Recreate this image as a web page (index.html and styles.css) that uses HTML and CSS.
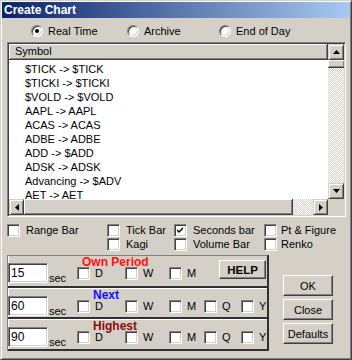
FILE: index.html
```html
<!DOCTYPE html>
<html>
<head>
<meta charset="utf-8">
<title>Create Chart</title>
<link rel="stylesheet" href="styles.css">
</head>
<body>
<div class="window">
  <div class="titlebar">Create Chart</div>

  <div class="radios">
    <div class="radio r1"><span class="rb on"></span>Real Time</div>
    <div class="radio r2"><span class="rb"></span>Archive</div>
    <div class="radio r3"><span class="rb"></span>End of Day</div>
  </div>

  <div class="listbox">
    <div class="lb-header">Symbol</div>
    <div class="sbtn up"><svg width="7" height="4" viewBox="0 0 7 4"><polygon points="3.5,0 7,4 0,4" fill="#000"/></svg></div>
    <div class="lb-items">
      <div>$TICK -&gt; $TICK</div>
      <div>$TICKI -&gt; $TICKI</div>
      <div>$VOLD -&gt; $VOLD</div>
      <div>AAPL -&gt; AAPL</div>
      <div>ACAS -&gt; ACAS</div>
      <div>ADBE -&gt; ADBE</div>
      <div>ADD -&gt; $ADD</div>
      <div>ADSK -&gt; ADSK</div>
      <div>Advancing -&gt; $ADV</div>
      <div>AET -&gt; AET</div>
    </div>
    <div class="vscroll">
      <div class="vthumb"></div>
      <div class="hatch"></div>
      <div class="sbtn down"><svg width="7" height="4" viewBox="0 0 7 4"><polygon points="0,0 7,0 3.5,4" fill="#000"/></svg></div>
    </div>
    <div class="hscroll">
      <div class="sbtn left"><svg width="4" height="7" viewBox="0 0 4 7"><polygon points="4,0 4,7 0,3.5" fill="#000"/></svg></div>
      <div class="hthumb"></div>
      <div class="hatch hh"></div>
      <div class="sbtn right"><svg width="4" height="7" viewBox="0 0 4 7"><polygon points="0,0 4,3.5 0,7" fill="#000"/></svg></div>
    </div>
    <div class="corner"></div>
  </div>

  <div class="types">
    <div class="chk"><span class="cb"></span>Range Bar</div>
    <div class="chk"><span class="cb"></span>Tick Bar</div>
    <div class="chk"><span class="cb"><svg width="7" height="7" viewBox="0 0 7 7"><path d="M0 2 L2 4 L6 0 L6 2 L2 6 L0 4 Z" fill="#000"/></svg></span>Seconds bar</div>
    <div class="chk pt"><span class="cb"></span>Pt &amp; Figure</div>
    <div></div>
    <div class="chk"><span class="cb"></span>Kagi</div>
    <div class="chk"><span class="cb"></span>Volume Bar</div>
    <div class="chk pt"><span class="cb"></span>Renko</div>
  </div>

  <div class="bottom">
    <div class="panel">
      <div class="sect s1">
        <div class="stitle own">Own Period</div>
        <div class="srow">
          <div class="field">15</div>
          <span class="sec">sec</span>
          <div class="cg gd"><span class="cb"></span>D</div>
          <div class="cg gw"><span class="cb"></span>W</div>
          <div class="cg gm"><span class="cb"></span>M</div>
          <button class="help">HELP</button>
        </div>
      </div>
      <div class="sect s2">
        <div class="stitle next">Next</div>
        <div class="srow">
          <div class="field">60</div>
          <span class="sec">sec</span>
          <div class="cg gd"><span class="cb"></span>D</div>
          <div class="cg gw"><span class="cb"></span>W</div>
          <div class="cg gm"><span class="cb"></span>M</div>
          <div class="cg gq"><span class="cb"></span>Q</div>
          <div class="cg gy"><span class="cb"></span>Y</div>
        </div>
      </div>
      <div class="sect s3">
        <div class="stitle high">Highest</div>
        <div class="srow">
          <div class="field">90</div>
          <span class="sec">sec</span>
          <div class="cg gd"><span class="cb"></span>D</div>
          <div class="cg gw"><span class="cb"></span>W</div>
          <div class="cg gm"><span class="cb"></span>M</div>
          <div class="cg gq"><span class="cb"></span>Q</div>
          <div class="cg gy"><span class="cb"></span>Y</div>
        </div>
      </div>
    </div>
    <div class="buttons">
      <button class="btn">OK</button>
      <button class="btn">Close</button>
      <button class="btn">Defaults</button>
    </div>
  </div>
</div>
</body>
</html>
```

FILE: styles.css
```css
* { box-sizing: border-box; }
html, body { margin: 0; padding: 0; }
body {
  width: 352px;
  height: 360px;
  overflow: hidden;
  background: #d4d0c8;
  font-family: "Liberation Sans", Arial, sans-serif;
  font-size: 11px;
  color: #000;
}
.window {
  width: 352px;
  height: 360px;
  background: #d4d0c8;
  border: 1px solid;
  border-color: #d4d0c8 #404040 #404040 #d4d0c8;
  box-shadow: inset 1px 1px 0 #fff, inset -1px -1px 0 #808080;
  padding: 1px;
}
.titlebar {
  height: 16px;
  line-height: 16px;
  padding-left: 2px;
  background: linear-gradient(to right, #0a246a, #a6caf0);
  color: #fff;
  font-weight: bold;
  font-size: 12px;
}

/* radios */
.radios {
  margin-top: 6px;
  height: 14px;
  padding-left: 29px;
  display: flex;
  align-items: center;
}
.radio { display: flex; align-items: center; }
.r1 { width: 96px; }
.r2 { width: 92px; }
.rb {
  position: relative;
  width: 12px;
  height: 12px;
  border-radius: 50%;
  background: #fff;
  border: 1px solid;
  border-color: #808080 #fff #fff #808080;
  box-shadow: inset 1px 1px 0 #404040, inset -1px -1px 0 #d4d0c8;
  margin-right: 5px;
}
.rb.on::after {
  content: "";
  position: absolute;
  left: 3px;
  top: 3px;
  width: 4px;
  height: 4px;
  border-radius: 50%;
  background: #000;
}

/* listbox */
.listbox {
  margin: 4px 0 0 5px;
  width: 339px;
  height: 175px;
  border: 1px solid;
  border-color: #808080 #fff #fff #808080;
  box-shadow: inset 1px 1px 0 #404040, inset -1px -1px 0 #d4d0c8;
  padding: 1px;
  background: #fff;
  display: grid;
  grid-template-columns: minmax(0, 1fr) 16px;
  grid-template-rows: 16px minmax(0, 1fr) 16px;
}
.lb-header {
  background: #d4d0c8;
  border-right: 1px solid #404040;
  border-bottom: 1px solid #404040;
  box-shadow: inset 1px 1px 0 #fff, inset -1px -1px 0 #808080;
  line-height: 15px;
  padding-left: 6px;
}
.lb-items {
  overflow: hidden;
  white-space: nowrap;
  padding: 2px 0 0 16px;
  line-height: 14px;
}
.sbtn {
  background: #d4d0c8;
  border: 1px solid;
  border-color: #d4d0c8 #404040 #404040 #d4d0c8;
  box-shadow: inset 1px 1px 0 #fff, inset -1px -1px 0 #808080;
  display: flex;
  align-items: center;
  justify-content: center;
}
.sbtn svg { display: block; }
.vscroll { display: flex; flex-direction: column; }
.vthumb {
  height: 8px;
  background: #d4d0c8;
  border-bottom: 1px solid #404040;
  box-shadow: inset 1px 1px 0 #fff, inset -1px -1px 0 #808080;
}
.hatch {
  flex: 1;
  background-color: #fff;
  background-image: conic-gradient(#d4d0c8 25%, #fff 0 50%, #d4d0c8 0 75%, #fff 0);
  background-size: 2px 2px;
}
.down { height: 16px; }
.hscroll { display: flex; }
.left, .right { width: 15px; }
.hthumb {
  flex: 1;
  background: #d4d0c8;
  border-right: 1px solid #404040;
  border-bottom: 1px solid #404040;
  box-shadow: inset 1px 1px 0 #fff, inset -1px -1px 0 #808080;
}
.hh { flex: 0 0 20px; }
.corner { background: #d4d0c8; }

/* chart types */
.types {
  margin: 6px 0 0 5px;
  display: grid;
  grid-template-columns: 100px 67px 90px 1fr;
  grid-auto-rows: 14px;
}
.chk { display: flex; align-items: center; white-space: nowrap; }
.cb {
  flex: 0 0 13px;
  width: 13px;
  height: 13px;
  background: #fff;
  border: 1px solid;
  border-color: #808080 #fff #fff #808080;
  box-shadow: inset 1px 1px 0 #404040, inset -1px -1px 0 #d4d0c8;
  display: flex;
  align-items: center;
  justify-content: center;
}
.chk .cb { margin-right: 6px; }
.chk.pt .cb { margin-right: 4px; }

/* bottom */
.bottom {
  margin-top: 4px;
  display: flex;
}
.panel {
  margin-left: 5px;
  width: 262px;
  border-left: 1px solid #808080;
  border-right: 2px solid #303030;
}
.sect {
  border-bottom: 2px solid #303030;
  box-shadow: inset 1px 0 0 #fff;
}
.s1 { border-top: 1px solid #808080; padding-bottom: 3px; }
.s2 { border-top: 1px solid #fff; padding-bottom: 1px; }
.s3 { border-top: 1px solid #fff; padding-bottom: 2px; }
.stitle {
  height: 12px;
  line-height: 12px;
  font-size: 12px;
  font-weight: bold;
  white-space: nowrap;
}
.own { padding-left: 74px; color: #ff1010; }
.next { padding-left: 85px; color: #1010ff; }
.high { padding-left: 85px; color: #8e0a0a; }
.srow {
  margin-top: -5px;
  height: 20px;
  display: flex;
  align-items: center;
}
.field {
  flex: 0 0 40px;
  height: 20px;
  background: #fff;
  border: 1px solid;
  border-color: #808080 #fff #fff #808080;
  box-shadow: inset 1px 1px 0 #404040, inset -1px -1px 0 #d4d0c8;
  padding: 2px 0 0 2px;
  font-size: 12px;
  line-height: 14px;
}
.sec {
  flex: 0 0 29px;
  align-self: flex-end;
  padding-left: 1px;
  line-height: 11px;
  margin-bottom: -1px;
}
.cg {
  display: flex;
  align-items: center;
  align-self: flex-end;
  margin-bottom: 3px;
  line-height: 11px;
}
.cg .cb { margin-right: 5px; }
.gd { flex: 0 0 48px; }
.gw { flex: 0 0 44px; }
.gm { flex: 0 0 35px; }
.gq { flex: 0 0 37px; }
.help {
  margin-left: auto;
  margin-right: 1px;
  align-self: flex-start;
  margin-top: -3px;
  width: 47px;
  height: 19px;
  padding: 0;
  font-family: "Liberation Sans", Arial, sans-serif;
  font-size: 11.5px;
  font-weight: bold;
  color: #000;
  background: #d4d0c8;
  border: 1px solid;
  border-color: #fff #404040 #404040 #fff;
  box-shadow: inset -1px -1px 0 #808080;
}
.buttons {
  margin-left: 14px;
  width: 50px;
  padding-top: 20px;
  display: flex;
  flex-direction: column;
  gap: 3px;
}
.btn {
  width: 50px;
  height: 21px;
  padding: 0;
  font-family: "Liberation Sans", Arial, sans-serif;
  font-size: 11px;
  color: #000;
  background: #d4d0c8;
  border: 1px solid;
  border-color: #fff #404040 #404040 #fff;
  box-shadow: inset -1px -1px 0 #808080;
}
```
